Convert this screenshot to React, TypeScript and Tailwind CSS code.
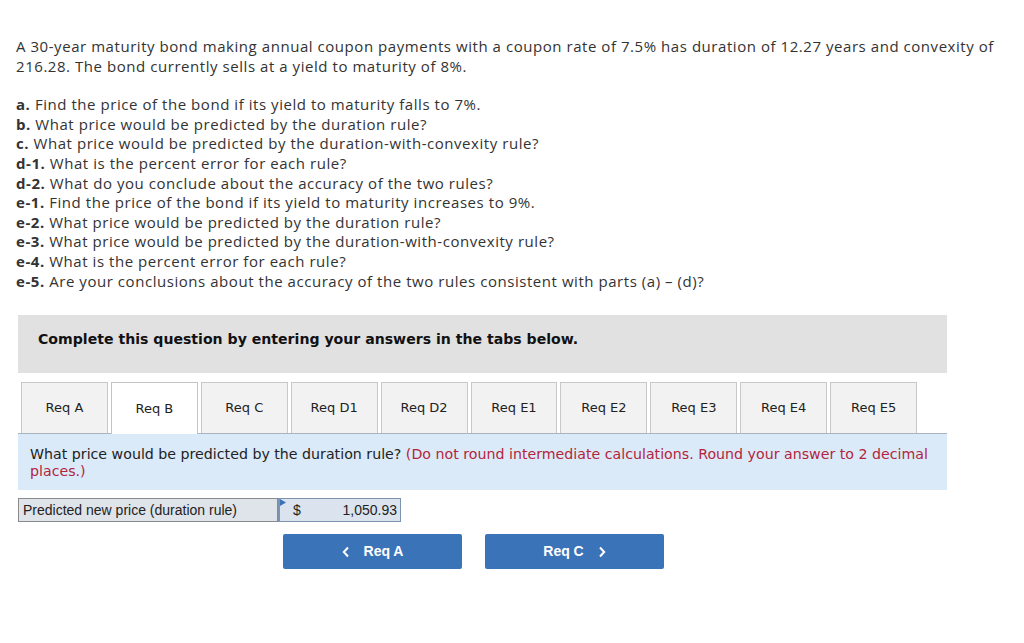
import React from "react";

const tabs = ["Req A", "Req B", "Req C", "Req D1", "Req D2", "Req E1", "Req E2", "Req E3", "Req E4", "Req E5"];

const parts: [string, string][] = [
  ["a.", " Find the price of the bond if its yield to maturity falls to 7%."],
  ["b.", " What price would be predicted by the duration rule?"],
  ["c.", " What price would be predicted by the duration-with-convexity rule?"],
  ["d-1.", " What is the percent error for each rule?"],
  ["d-2.", " What do you conclude about the accuracy of the two rules?"],
  ["e-1.", " Find the price of the bond if its yield to maturity increases to 9%."],
  ["e-2.", " What price would be predicted by the duration rule?"],
  ["e-3.", " What price would be predicted by the duration-with-convexity rule?"],
  ["e-4.", " What is the percent error for each rule?"],
  ["e-5.", " Are your conclusions about the accuracy of the two rules consistent with parts (a) – (d)?"],
];

export default function App() {
  return (
    <div className="w-[1024px] h-[643px] bg-white text-[#333]">
      <div className="pt-[37px] pl-[16px] pr-[16px] font-['Open_Sans',sans-serif] text-[15px] tracking-[0.55px] leading-[19.6px] text-[#333]">
        <p>
          A 30-year maturity bond making annual coupon payments with a coupon rate of 7.5% has duration of 12.27 years and convexity of 216.28. The bond currently sells at a yield to maturity of 8%.
        </p>
        <div className="mt-[19px]">
          {parts.map(([b, t]) => (
            <div key={b}>
              <span className="font-bold">{b}</span>
              {t}
            </div>
          ))}
        </div>
      </div>

      <div className="ml-[18px] w-[929px] mt-[24px]">
        <div className="h-[58px] bg-[#e1e1e1] pt-[14px] pl-[20px] font-['DejaVu_Sans',Verdana,sans-serif] font-bold text-[14.1px] text-[#111]">
          Complete this question by entering your answers in the tabs below.
        </div>

        <div className="mt-[9px] ml-[3px] w-[896px] flex gap-[3px] relative z-10">
          {tabs.map((t) => {
            const active = t === "Req B";
            return (
              <div
                key={t}
                className={
                  active
                    ? "flex-1 h-[52px] -mb-[1px] bg-white border border-b-0 border-[#c4c4c4] flex items-center justify-center font-['DejaVu_Sans',Verdana,sans-serif] text-[13px] text-[#222]"
                    : "flex-1 h-[51px] bg-[#f2f2f2] border border-b-0 border-[#c8c8c8] flex items-center justify-center font-['DejaVu_Sans',Verdana,sans-serif] text-[13px] text-[#222]"
                }
              >
                {t}
              </div>
            );
          })}
        </div>
        <div className="bg-[#dbeaf8] border-t border-[#a9b4bf] pt-[12px] pb-[10px] pl-[12px] pr-[12px] font-['DejaVu_Sans',Verdana,sans-serif] text-[14.2px] leading-[17px] text-[#222]">
          What price would be predicted by the duration rule?{" "}
          <span className="text-[#b3253d]">
            (Do not round intermediate calculations. Round your answer to 2 decimal places.)
          </span>
        </div>

        <div className="mt-[8px] flex h-[24px] font-['Liberation_Sans',Arial,sans-serif] text-[14px] text-[#222]">
          <div className="w-[260px] bg-[#dfe3ea] border border-[#8a8a8a] flex items-center pl-[4px]">
            Predicted new price (duration rule)
          </div>
          <div className="relative w-[123px] bg-[#dbe3ee] border border-[#7d93b0] border-l-[2px] flex items-center pl-[13px] pr-[3px]">
            <svg className="absolute left-0 top-0" width="6" height="7" viewBox="0 0 6 7">
              <polygon points="0,0 6,3.5 0,7" fill="#3a73b8" />
            </svg>
            <span>$</span>
            <span className="ml-auto">1,050.93</span>
          </div>
        </div>

        <div className="mt-[12px] flex gap-[23px] pl-[265px] font-['Liberation_Sans',Arial,sans-serif] font-bold text-[14px] text-white">
          <div className="w-[179px] h-[35px] bg-[#3a73b8] rounded-[2px] flex items-center justify-center gap-[14px]">
            <svg width="8" height="12" viewBox="0 0 8 12">
              <polyline points="6,1.5 1.8,6 6,10.5" fill="none" stroke="white" strokeWidth="2" />
            </svg>
            <span>Req A</span>
          </div>
          <div className="w-[179px] h-[35px] bg-[#3a73b8] rounded-[2px] flex items-center justify-center gap-[14px]">
            <span>Req C</span>
            <svg width="8" height="12" viewBox="0 0 8 12">
              <polyline points="2,1.5 6.2,6 2,10.5" fill="none" stroke="white" strokeWidth="2" />
            </svg>
          </div>
        </div>
      </div>
    </div>
  );
}
